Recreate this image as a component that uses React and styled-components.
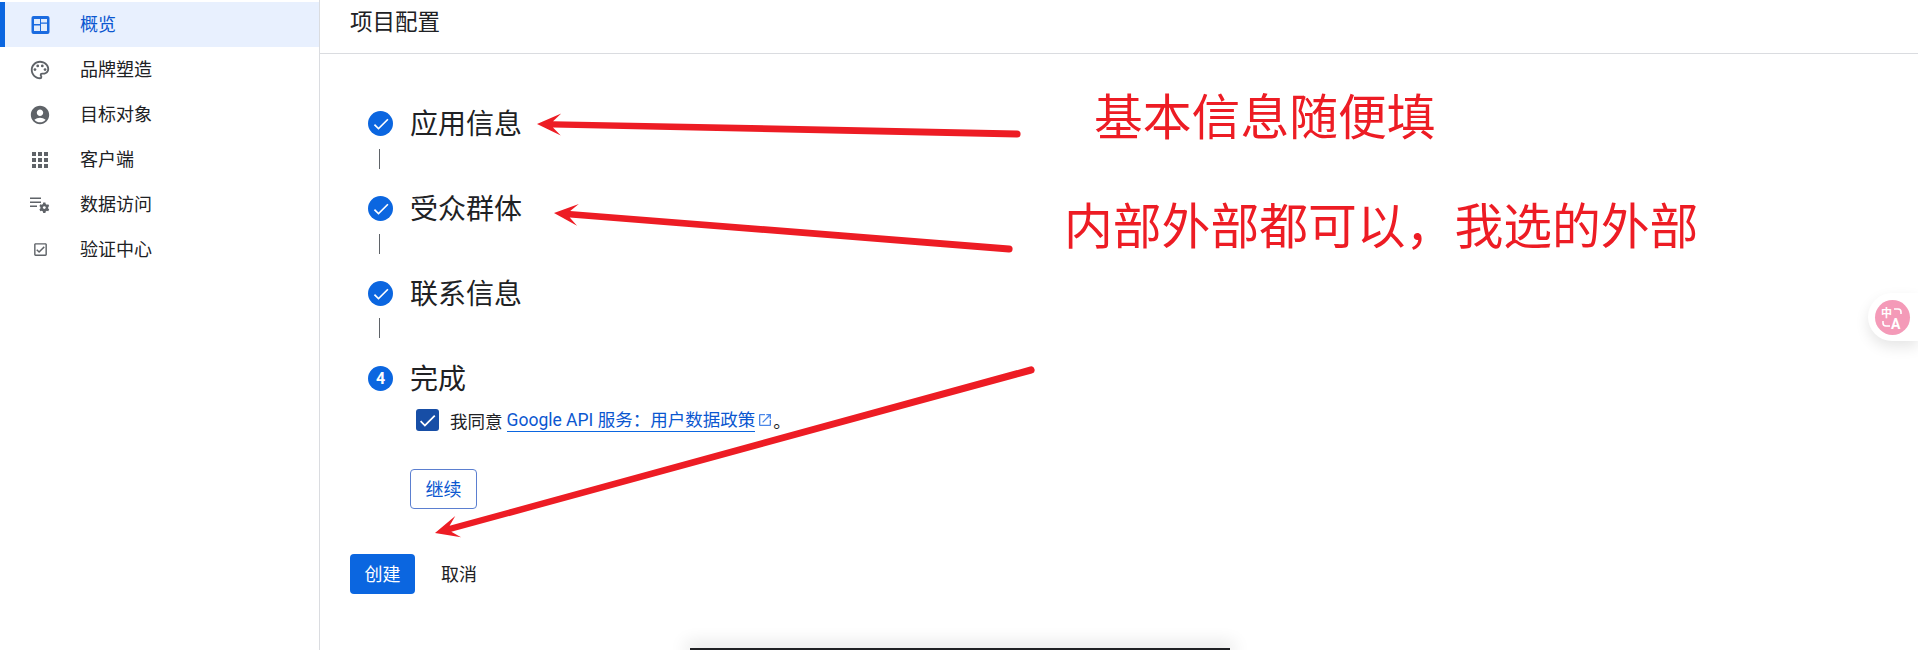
import React from 'react';
import styled, { createGlobalStyle } from 'styled-components';
import { MdOutlinePalette, MdAccountCircle, MdApps, MdOutlineCheckBox, MdOpenInNew, MdCheck } from 'react-icons/md';

const Global = createGlobalStyle`
  html, body { margin: 0; padding: 0; background: #fff; }
  body { font-family: Roboto, "Noto Sans CJK SC", sans-serif; color: #202124; }
`;

const Page = styled.div`
  position: relative;
  display: flex;
  width: 1918px;
  height: 650px;
  overflow: hidden;
  background: #fff;
`;

const Sidebar = styled.nav`
  box-sizing: border-box;
  width: 320px;
  flex: none;
  padding-top: 2px;
  border-right: 1px solid #dadce0;
  display: flex;
  flex-direction: column;
`;

const NavItem = styled.div`
  box-sizing: border-box;
  height: 45px;
  display: flex;
  align-items: center;
  padding-left: ${p => (p.$active ? '25px' : '30px')};
  border-left: ${p => (p.$active ? '5px solid #0b66e0' : 'none')};
  background: ${p => (p.$active ? '#e8f0fe' : 'transparent')};
  color: ${p => (p.$active ? '#0b57d0' : '#202124')};
  font-size: 18px;
  line-height: 20px;
`;

const NavIcon = styled.span`
  width: 20px;
  height: 20px;
  margin-right: 30px;
  display: flex;
  align-items: center;
  justify-content: center;
  color: #5f6368;
  svg { flex: none; }
`;

const Main = styled.main`
  flex: 1;
  display: flex;
  flex-direction: column;
`;

const Header = styled.header`
  box-sizing: border-box;
  height: 54px;
  padding: 0 30px 13px;
  display: flex;
  align-items: center;
  border-bottom: 1px solid #dadce0;
  font-size: 22.5px;
`;

const Content = styled.div`
  padding: 56px 0 0 30px;
`;

const Steps = styled.div`
  display: flex;
  flex-direction: column;
  align-items: flex-start;
`;

const Step = styled.div`
  display: flex;
  align-items: center;
  height: 27px;
  font-size: 28px;
  line-height: 27px;
`;

const StepLabel = styled.span`
  position: relative;
  top: 1px;
`;

const StepMark = styled.span`
  width: 25px;
  height: 25px;
  margin: 0 17px 0 18px;
  display: flex;
  align-items: center;
  justify-content: center;
  border-radius: 50%;
  background: #0b66e0;
  color: #fff;
  font-family: Roboto, sans-serif;
  font-size: 16px;
  font-weight: 700;
  svg { display: block; }
`;

const Connector = styled.div`
  width: 1px;
  height: 20px;
  margin: ${p => (p.$last ? '11px 0 27px 29px' : '12px 0 26px 29px')};
  background: #5f6368;
`;

const Consent = styled.div`
  display: flex;
  align-items: center;
  margin: 16px 0 0 66px;
  font-size: 17.5px;
  height: 24px;
`;

const Checkbox = styled.span`
  width: 23px;
  height: 22px;
  margin-right: 11px;
  display: flex;
  align-items: center;
  justify-content: center;
  border-radius: 3px;
  background: #174ea6;
  color: #fff;
`;

const Policy = styled.a`
  margin-left: 4px;
  color: #0b57d0;
  text-decoration: none;
  border-bottom: 1px solid #0b66e0;
  line-height: 22px;
`;

const External = styled.span`
  margin-left: 2px;
  display: flex;
  color: #4a86e8;
`;

const OutlineButton = styled.button`
  display: block;
  width: 67px;
  height: 40px;
  margin: 37px 0 0 60px;
  padding: 0 0 2px;
  background: #fff;
  border: 1px solid #5b7fd0;
  border-radius: 4px;
  color: #0b57d0;
  font: 18px Roboto, "Noto Sans CJK SC", sans-serif;
`;

const Actions = styled.div`
  display: flex;
  align-items: center;
  margin-top: 45px;
`;

const PrimaryButton = styled.button`
  width: 65px;
  height: 40px;
  padding: 0 0 2px;
  border: none;
  border-radius: 4px;
  background: #0b66e0;
  color: #fff;
  font: 18px Roboto, "Noto Sans CJK SC", sans-serif;
`;

const TextButton = styled.button`
  margin: 0 0 2px 26px;
  padding: 0;
  border: none;
  background: none;
  color: #202124;
  font: 18px Roboto, "Noto Sans CJK SC", sans-serif;
`;

const Arrows = styled.svg`
  position: absolute;
  inset: 0;
  pointer-events: none;
`;

const Note = styled.div`
  position: absolute;
  left: ${p => p.$x}px;
  top: ${p => p.$y}px;
  color: #ed1c24;
  font-size: 48.8px;
  line-height: 60px;
  white-space: nowrap;
`;

const TranslateTab = styled.div`
  position: absolute;
  right: 0;
  top: 293px;
  width: 50px;
  height: 48px;
  box-sizing: border-box;
  padding-left: 7px;
  display: flex;
  align-items: center;
  background: #fff;
  border-radius: 24px 0 0 24px;
  box-shadow: 0 6px 14px rgba(0, 0, 0, 0.1);
`;

const TranslateDot = styled.div`
  position: relative;
  width: 35px;
  height: 35px;
  border-radius: 50%;
  background: #f49ab8;
  color: #fff;
  font-weight: 700;
`;

const GlyphZh = styled.span`
  position: absolute;
  left: 6px;
  top: 7px;
  font-size: 11px;
  line-height: 13px;
`;

const GlyphA = styled.span`
  position: absolute;
  left: 16px;
  top: 16px;
  font-family: Roboto, sans-serif;
  font-size: 14px;
  line-height: 16px;
`;

const GlyphArcs = styled.svg`
  position: absolute;
  inset: 0;
`;

const BottomBar = styled.div`
  position: absolute;
  left: 690px;
  bottom: 0;
  width: 540px;
  height: 2px;
  background: #202124;
  box-shadow: 0 0 18px 4px rgba(0, 0, 0, 0.14);
`;

const DashIcon = () => (
  <svg width="20" height="20" viewBox="0 0 20 20">
    <rect x="1.5" y="1" width="18" height="18" rx="2" fill="#1a6be0" />
    <path d="M4 4h6v5H4zM11 4h6v3.4h-6zM4 10.4h6V16H4zM11 8.8h6V16h-6z" fill="#e3ecfb" />
  </svg>
);

const DataIcon = () => (
  <svg width="20" height="20" viewBox="0 0 20 20" fill="#5f6368">
    <path d="M0 2.5h11v1.6H0zM0 6.5h11v1.6H0zM0 10.5h7v1.6H0z" />
    <path d="M13.2 7.6h2.2l.3 1.4 1.2.7 1.3-.4 1 1.8-1 1v1.3l1 1-1 1.8-1.3-.4-1.2.7-.3 1.4h-2.2l-.3-1.4-1.2-.7-1.3.4-1-1.8 1-1v-1.3l-1-1 1-1.8 1.3.4 1.2-.7z" />
    <circle cx="14.3" cy="12.6" r="1.4" fill="#fff" />
  </svg>
);

const arrow = (x1, y1, x2, y2) => {
  const deg = (Math.atan2(y2 - y1, x2 - x1) * 180) / Math.PI;
  const len = Math.hypot(x2 - x1, y2 - y1);
  return (
    <g key={x1} transform={`translate(${x1} ${y1}) rotate(${deg})`}>
      <path d={`M0 -3.6 L${len - 16} -3.2 L${len - 24} -11 L${len} 0 L${len - 24} 11 L${len - 16} 3.2 L0 3.6 A3.6 3.6 0 0 1 0 -3.6Z`} fill="#ed1c24" />
    </g>
  );
};

const items = [
  { label: '概览', icon: <DashIcon />, active: true },
  { label: '品牌塑造', icon: <MdOutlinePalette size={22} /> },
  { label: '目标对象', icon: <MdAccountCircle size={22} /> },
  { label: '客户端', icon: <MdApps size={24} /> },
  { label: '数据访问', icon: <DataIcon /> },
  { label: '验证中心', icon: <MdOutlineCheckBox size={17} /> },
];

const Done = () => (
  <StepMark><MdCheck size={20} /></StepMark>
);

const POLICY_TEXT = 'Google API 服务\uFF1A用户数据政策';
const NOTE_TWO = '内部外部都可以\uFF0C我选的外部';

export default function App() {
  return (
    <Page>
      <Global />
      <Sidebar>
        {items.map(i => (
          <NavItem key={i.label} $active={i.active}>
            <NavIcon>{i.icon}</NavIcon>
            <span>{i.label}</span>
          </NavItem>
        ))}
      </Sidebar>
      <Main>
        <Header>项目配置</Header>
        <Content>
          <Steps>
            <Step><Done /><StepLabel>应用信息</StepLabel></Step>
            <Connector />
            <Step><Done /><StepLabel>受众群体</StepLabel></Step>
            <Connector />
            <Step><Done /><StepLabel>联系信息</StepLabel></Step>
            <Connector $last />
            <Step><StepMark>4</StepMark><StepLabel>完成</StepLabel></Step>
          </Steps>
          <Consent>
            <Checkbox><MdCheck size={21} /></Checkbox>
            我同意
            <Policy>{POLICY_TEXT}</Policy>
            <External><MdOpenInNew size={16} /></External>
            。
          </Consent>
          <OutlineButton>继续</OutlineButton>
          <Actions>
            <PrimaryButton>创建</PrimaryButton>
            <TextButton>取消</TextButton>
          </Actions>
        </Content>
      </Main>
      <Arrows width="1918" height="650" viewBox="0 0 1918 650">
        {arrow(1017, 134, 537, 124)}
        {arrow(1009, 249, 554, 213)}
        {arrow(1031, 370, 435, 533)}
      </Arrows>
      <Note $x={1094} $y={89}>基本信息随便填</Note>
      <Note $x={1064} $y={198}>{NOTE_TWO}</Note>
      <TranslateTab>
        <TranslateDot>
          <GlyphZh>中</GlyphZh>
          <GlyphA>A</GlyphA>
          <GlyphArcs viewBox="0 0 35 35" fill="none" stroke="#fff" strokeWidth="1.6">
            <path d="M19 9h4a3 3 0 0 1 3 3v2" />
            <path d="M8 21v2a3 3 0 0 0 3 3h4" />
          </GlyphArcs>
        </TranslateDot>
      </TranslateTab>
      <BottomBar />
    </Page>
  );
}
